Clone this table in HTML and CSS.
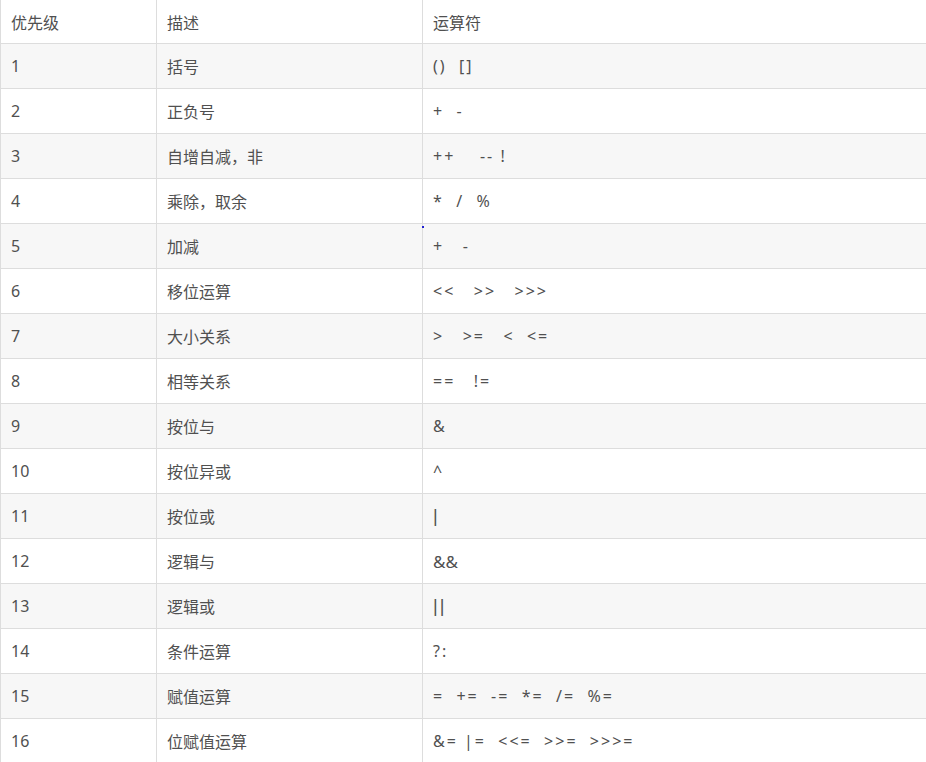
FILE: index.html
```html
<!DOCTYPE html>
<html lang="zh-CN">
<head>
<meta charset="utf-8">
<title>运算符优先级</title>
<link rel="stylesheet" href="styles.css">
</head>
<body>
<table class="prec">
  <thead>
    <tr><th class="c1">优先级</th><th class="c2">描述</th><th class="c3">运算符</th></tr>
  </thead>
  <tbody>
    <tr><td>1</td><td>括号</td><td class="op">()  []</td></tr>
    <tr><td>2</td><td>正负号</td><td class="op">+  -</td></tr>
    <tr><td>3</td><td>自增自减，非</td><td class="op">++    -- !</td></tr>
    <tr><td>4</td><td>乘除，取余</td><td class="op">*  /  %</td></tr>
    <tr><td>5</td><td>加减</td><td class="op">+   -</td></tr>
    <tr><td>6</td><td>移位运算</td><td class="op">&lt;&lt;   &gt;&gt;   &gt;&gt;&gt;</td></tr>
    <tr><td>7</td><td>大小关系</td><td class="op">&gt;   &gt;=   &lt;  &lt;=</td></tr>
    <tr><td>8</td><td>相等关系</td><td class="op">==   !=</td></tr>
    <tr><td>9</td><td>按位与</td><td class="op">&amp;</td></tr>
    <tr><td>10</td><td>按位异或</td><td class="op">^</td></tr>
    <tr><td>11</td><td>按位或</td><td class="op bar">|</td></tr>
    <tr><td>12</td><td>逻辑与</td><td class="op tight">&amp;&amp;</td></tr>
    <tr><td>13</td><td>逻辑或</td><td class="op bar">||</td></tr>
    <tr><td>14</td><td>条件运算</td><td class="op">?:</td></tr>
    <tr><td>15</td><td>赋值运算</td><td class="op">=  +=  -=  *=  /=  %=</td></tr>
    <tr><td>16</td><td>位赋值运算</td><td class="op">&amp;= |=  &lt;&lt;=  &gt;&gt;=  &gt;&gt;&gt;=</td></tr>
  </tbody>
</table>
<span class="dot"></span>
</body>
</html>
```

FILE: styles.css
```css
html, body {
  margin: 0;
  padding: 0;
  overflow: hidden;
  background: #ffffff;
}

body {
  position: relative;
  font-family: "Noto Sans", "Noto Sans CJK SC", sans-serif;
  font-size: 16px;
  color: #505050;
}

.prec {
  border-collapse: separate;
  border-spacing: 0;
  width: 960px;
  margin-top: -1px;
  border-left: 1px solid #dddddd;
  table-layout: fixed;
}

.prec th,
.prec td {
  height: 45px;
  padding: 0 10px;
  box-sizing: border-box;
  text-align: left;
  font-weight: normal;
  vertical-align: middle;
  border-right: 1px solid #dddddd;
  border-bottom: 1px solid #dddddd;
  white-space: nowrap;
}

.prec th {
  border-top: 1px solid #dddddd;
}

.c1 { width: 156px; }
.c2 { width: 266px; }
.c3 { width: auto; }

.prec tbody tr:nth-child(odd) {
  background: #f7f7f7;
}

.prec .op {
  white-space: pre;
  letter-spacing: 2px;
}

.prec .tight {
  letter-spacing: 0;
  font-size: 17px;
}

.prec .bar {
  font-family: "Liberation Sans", sans-serif;
  font-size: 18px;
  letter-spacing: 2px;
}

.dot {
  position: absolute;
  left: 422px;
  top: 226px;
  width: 2px;
  height: 2px;
  background: #2020d0;
}
```
